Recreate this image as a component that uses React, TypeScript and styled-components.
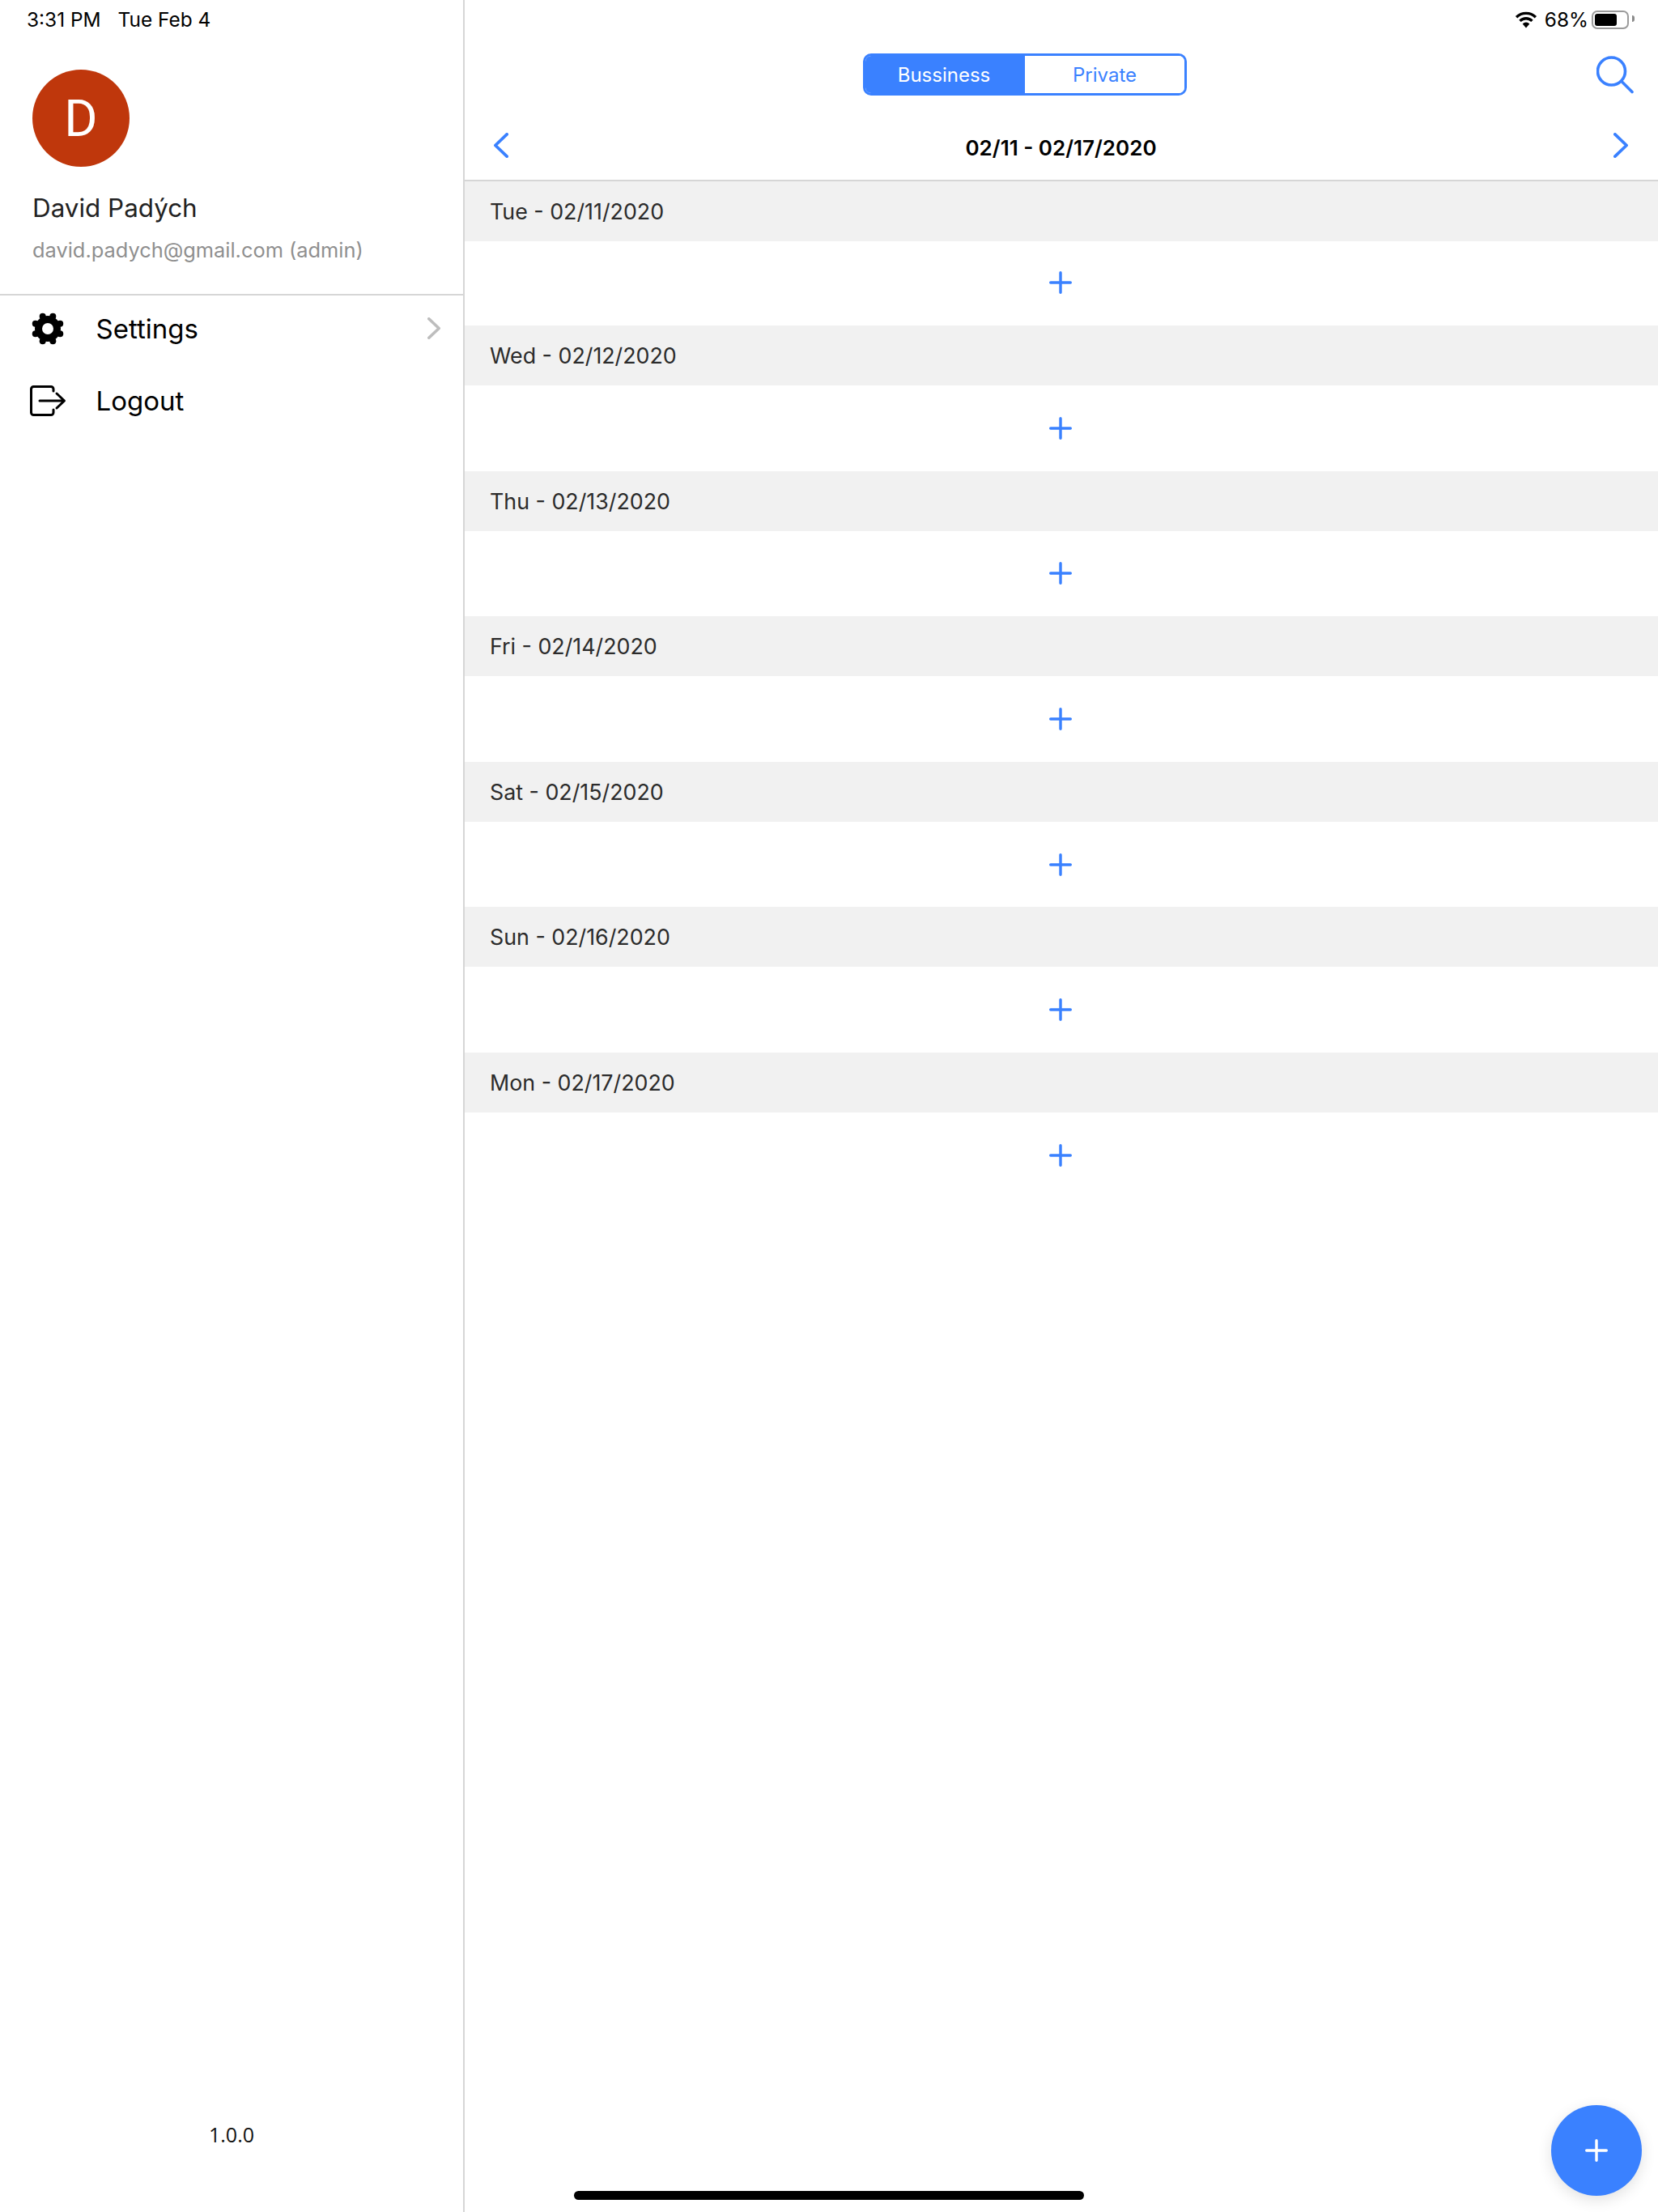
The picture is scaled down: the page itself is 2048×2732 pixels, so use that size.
import React from "react";
import styled, { createGlobalStyle } from "styled-components";

const BLUE = "#3a81ff";
const LINE = "#d6d6d6";

const Global = createGlobalStyle`
  html, body { margin: 0; padding: 0; background: #fff; }
  body { font-family: Inter, "Noto Sans", sans-serif; -webkit-font-smoothing: antialiased; }
  * { box-sizing: border-box; }
`;

const Page = styled.div`
  position: relative;
  width: 2048px;
  height: 2732px;
  display: grid;
  grid-template-columns: 574px 1fr;
  overflow: hidden;
  background: #fff;
`;

/* ---------- sidebar ---------- */
const Sidebar = styled.aside`
  display: flex;
  flex-direction: column;
  border-right: 2px solid ${LINE};
`;

const StatusLeft = styled.div`
  height: 47px;
  padding-left: 33px;
  display: flex;
  align-items: center;
  gap: 21px;
  font-size: 24.4px;
  color: #000;
`;

const Profile = styled.div`
  height: 318px;
  padding: 39px 0 0 40px;
  border-bottom: 2px solid ${LINE};
`;

const Avatar = styled.div`
  width: 120px;
  height: 120px;
  border-radius: 50%;
  background: #bf370c;
  color: #fff;
  display: flex;
  align-items: center;
  justify-content: center;
  font-family: Roboto, Inter, sans-serif;
  font-size: 63px;
  line-height: 1;
`;

const Name = styled.div`
  margin-top: 31px;
  font-size: 31.4px;
  line-height: 40px;
  font-weight: 400;
  color: #222;
`;

const Email = styled.div`
  margin-top: 14px;
  font-size: 25.4px;
  line-height: 36px;
  color: #8f8f8f;
`;

const Menu = styled.nav`
  display: flex;
  flex-direction: column;
  gap: 8px;
`;

const MenuRow = styled.div`
  height: 81px;
  display: flex;
  align-items: center;
  padding: 0 28px 0 37px;
  font-size: 33px;
  color: #000;
`;

const MenuIcon = styled.span`
  width: 81.5px;
  display: flex;
  align-items: center;
`;

const MenuLabel = styled.span`
  flex: 1;
`;

const Version = styled.div`
  margin-top: auto;
  padding-bottom: 79px;
  text-align: center;
  font-family: "Open Sans", sans-serif;
  font-size: 25px;
  line-height: 34px;
  color: #111;
`;

/* ---------- main ---------- */
const Main = styled.main`
  display: flex;
  flex-direction: column;
  min-width: 0;
`;

const StatusRight = styled.div`
  height: 48px;
  padding-right: 30px;
  display: flex;
  align-items: center;
  justify-content: flex-end;
  font-size: 24.4px;
  color: #000;
`;

const Percent = styled.span`
  margin: 0 4px 0 9px;
`;

const Battery = styled.span`
  position: relative;
  width: 46px;
  height: 23px;
  margin-right: 6px;
  padding: 2px;
  border: 2px solid #9b9b9b;
  border-radius: 7px;
  display: block;

  &::before {
    content: "";
    display: block;
    width: 27px;
    height: 15px;
    border-radius: 3px;
    background: #000;
  }

  &::after {
    content: "";
    position: absolute;
    right: -9px;
    top: 4px;
    width: 3px;
    height: 8px;
    border-radius: 0 3px 3px 0;
    background: #8a8a8a;
  }
`;

const Toolbar = styled.div`
  display: flex;
  align-items: center;
  padding: 18px 30px 0 492px;
`;

const Segmented = styled.div`
  width: 400px;
  height: 52px;
  display: flex;
  border: 3px solid ${BLUE};
  border-radius: 10px;
  overflow: hidden;
`;

const Segment = styled.div<{ $active?: boolean }>`
  width: 197px;
  padding-right: ${(p) => (p.$active ? 3 : 0)}px;
  display: flex;
  align-items: center;
  justify-content: center;
  font-size: 24px;
  color: ${(p) => (p.$active ? "#fff" : BLUE)};
  background: ${(p) => (p.$active ? BLUE : "#fff")};
`;

const SearchButton = styled.span`
  margin-left: auto;
  display: flex;
`;

const NavRow = styled.div`
  height: 106px;
  display: flex;
  justify-content: space-between;
  align-items: flex-start;
  padding: 46px 37px 0 36px;
  border-bottom: 2px solid ${LINE};
`;

const RangeTitle = styled.div`
  margin-top: 3px;
  font-size: 26px;
  line-height: 32px;
  font-weight: 600;
  color: #000;
`;

const DayList = styled.div`
  display: flex;
  flex-direction: column;
`;

const DayHeader = styled.div`
  height: 74px;
  padding-left: 31px;
  display: flex;
  align-items: center;
  background: #f1f1f1;
  font-size: 26.8px;
  color: #2b2b2b;
`;

const DayBody = styled.div<{ $first?: boolean }>`
  height: ${(p) => (p.$first ? "104px" : "105.6px")};
  display: flex;
  align-items: center;
  justify-content: center;
  padding: 0 2px ${(p) => (p.$first ? 2 : 0)}px 0;
`;

const Fab = styled.div`
  position: absolute;
  right: 20px;
  bottom: 20px;
  width: 112px;
  height: 112px;
  border-radius: 50%;
  background: ${BLUE};
  display: flex;
  align-items: center;
  justify-content: center;
  box-shadow: 0 5px 18px rgba(0, 0, 0, 0.12);
`;

const HomeBar = styled.div`
  position: absolute;
  left: 709px;
  bottom: 15px;
  width: 630px;
  height: 11px;
  border-radius: 6px;
  background: #000;
`;

/* ---------- drawings ---------- */
const Gear = () => {
  const teeth = Array.from({ length: 8 }, (_, i) => {
    const a = ((22.5 + i * 45) * Math.PI) / 180;
    return { x: 21 + Math.cos(a) * 16.5, y: 21 + Math.sin(a) * 16.5 };
  });
  return (
    <svg width="44" height="42" viewBox="0 0 44 42" style={{ marginLeft: 1 }}>
      <g fill="#000">
        <circle cx="21" cy="21" r="16" />
        {teeth.map((t, i) => (
          <circle key={i} cx={t.x} cy={t.y} r="4" />
        ))}
      </g>
      <circle cx="21" cy="21" r="7" fill="#fff" />
    </svg>
  );
};

const LogoutIcon = () => (
  <svg width="46" height="40" viewBox="0 0 46 40" fill="none" stroke="#000" strokeWidth="3" strokeLinecap="round" strokeLinejoin="round">
    <path d="M29 8V5.5A3 3 0 0 0 26 2.5H4.5A3 3 0 0 0 1.5 5.5V34.5A3 3 0 0 0 4.5 37.5H26A3 3 0 0 0 29 34.5V31" />
    <path d="M12 20H42M33 11L42.5 20L33 29" />
  </svg>
);

const Chevron = ({ dir, color, w, h, sw }: { dir: "l" | "r"; color: string; w: number; h: number; sw: number }) => (
  <svg width={w} height={h} viewBox={`0 0 ${w} ${h}`} fill="none" stroke={color} strokeWidth={sw} strokeLinecap="round" strokeLinejoin="round">
    {dir === "l" ? (
      <path d={`M${w - sw / 2} ${sw / 2}L${sw / 2} ${h / 2}L${w - sw / 2} ${h - sw / 2}`} />
    ) : (
      <path d={`M${sw / 2} ${sw / 2}L${w - sw / 2} ${h / 2}L${sw / 2} ${h - sw / 2}`} />
    )}
  </svg>
);

const Plus = ({ color, size, sw }: { color: string; size: number; sw: number }) => (
  <svg width={size} height={size} viewBox={`0 0 ${size} ${size}`} stroke={color} strokeWidth={sw} strokeLinecap="round">
    <path d={`M${size / 2} ${sw / 2}V${size - sw / 2}M${sw / 2} ${size / 2}H${size - sw / 2}`} />
  </svg>
);

const SearchIcon = () => (
  <svg width="46" height="47" viewBox="0 0 46 47" fill="none" stroke={BLUE} strokeWidth="3.6" strokeLinecap="round">
    <circle cx="18.5" cy="19" r="17" />
    <path d="M31 31.5L44 44.5" />
  </svg>
);

const Wifi = () => (
  <svg width="28" height="21" viewBox="0 0 27 21" fill="none" stroke="#000" strokeWidth="3.4" style={{ display: "block" }}>
    <path d="M1.6 7.2A17 17 0 0 1 25.4 7.2" />
    <path d="M6 11.9A10.6 10.6 0 0 1 21 11.9" />
    <path d="M9.2 15.4L13.5 20.5L17.8 15.4A6 6 0 0 0 9.2 15.4Z" fill="#000" stroke="none" />
  </svg>
);

const DAYS = [
  "Tue - 02/11/2020",
  "Wed - 02/12/2020",
  "Thu - 02/13/2020",
  "Fri - 02/14/2020",
  "Sat - 02/15/2020",
  "Sun - 02/16/2020",
  "Mon - 02/17/2020",
];

export default function App() {
  return (
    <Page>
      <Global />
      <Sidebar>
        <StatusLeft>
          <span>3:31 PM</span>
          <span>Tue Feb 4</span>
        </StatusLeft>
        <Profile>
          <Avatar>D</Avatar>
          <Name>David Padých</Name>
          <Email>david.padych@gmail.com (admin)</Email>
        </Profile>
        <Menu>
          <MenuRow>
            <MenuIcon>
              <Gear />
            </MenuIcon>
            <MenuLabel>Settings</MenuLabel>
            <Chevron dir="r" color="#bdbdbd" w={16} h={27} sw={3.6} />
          </MenuRow>
          <MenuRow>
            <MenuIcon>
              <LogoutIcon />
            </MenuIcon>
            <MenuLabel>Logout</MenuLabel>
          </MenuRow>
        </Menu>
        <Version>1.0.0</Version>
      </Sidebar>
      <Main>
        <StatusRight>
          <Wifi />
          <Percent>68%</Percent>
          <Battery />
        </StatusRight>
        <Toolbar>
          <Segmented>
            <Segment $active>Bussiness</Segment>
            <Segment>Private</Segment>
          </Segmented>
          <SearchButton>
            <SearchIcon />
          </SearchButton>
        </Toolbar>
        <NavRow>
          <Chevron dir="l" color={BLUE} w={18} h={31} sw={3.8} />
          <RangeTitle>02/11 - 02/17/2020</RangeTitle>
          <Chevron dir="r" color={BLUE} w={18} h={31} sw={3.8} />
        </NavRow>
        <DayList>
          {DAYS.map((d, i) => (
            <React.Fragment key={d}>
              <DayHeader>{d}</DayHeader>
              <DayBody $first={i === 0}>
                <Plus color={BLUE} size={28} sw={3.4} />
              </DayBody>
            </React.Fragment>
          ))}
        </DayList>
      </Main>
      <Fab>
        <Plus color="#fff" size={28} sw={3.4} />
      </Fab>
      <HomeBar />
    </Page>
  );
}
